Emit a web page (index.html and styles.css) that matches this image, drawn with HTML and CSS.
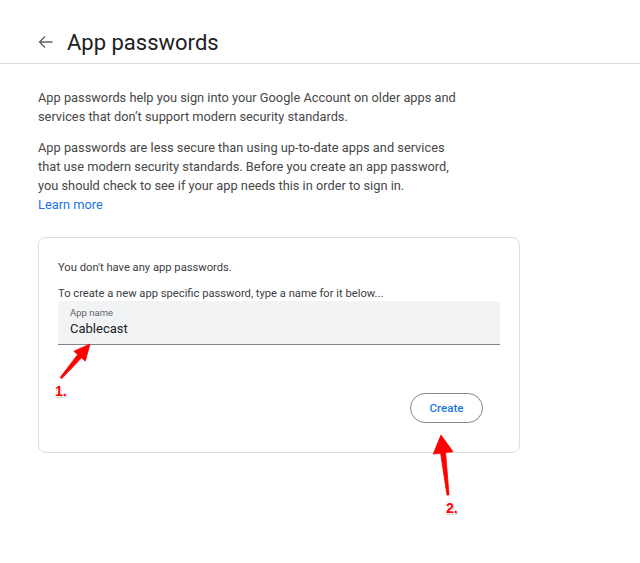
FILE: index.html
```html
<!DOCTYPE html>
<html lang="en">
<head>
<meta charset="utf-8">
<title>App passwords</title>
<link rel="stylesheet" href="styles.css">
</head>
<body>
<header class="topbar">
  <svg class="back" width="15" height="14" viewBox="0 0 15 14" aria-hidden="true"><path d="M14.5 7H1.5M7 1.5L1.5 7L7 12.5" fill="none" stroke="#5f6368" stroke-width="1.3"/></svg>
  <h1 class="title">App passwords</h1>
</header>
<main class="content">
  <p class="intro">App passwords help you sign into your Google Account on older apps and services that don’t support modern security standards.</p>
  <p class="intro">App passwords are less secure than using up-to-date apps and services that use modern security standards. Before you create an app password, you should check to see if your app needs this in order to sign in.<br><a class="link" href="#">Learn more</a></p>
  <section class="card">
    <p class="note">You don't have any app passwords.</p>
    <p class="note hint">To create a new app specific password, type a name for it below...</p>
    <div class="field">
      <span class="field-label">App name</span>
      <span class="field-value">Cablecast</span>
    </div>
    <div class="actions">
      <button class="btn">Create</button>
    </div>
  </section>
</main>
<svg class="annot" width="640" height="563" viewBox="0 0 640 563" aria-hidden="true">
  <polygon points="61.8,378.6 81.5,357.8 85.3,361.1 90,344 73.9,351.3 77.7,354.6 60.2,377.4" fill="#ff0000" stroke="#ff0000" stroke-width="0.8" stroke-linejoin="round"/>
  <polygon points="449,494.9 445.6,452.6 453,451.7 441,435 433.2,454.1 440.6,453.2 447,495.1" fill="#ff0000" stroke="#ff0000" stroke-width="0.8" stroke-linejoin="round"/>
</svg>
<span class="mark mark-1">1.</span>
<span class="mark mark-2">2.</span>
</body>
</html>
```
FILE: styles.css
```css
html, body {
  margin: 0;
  padding: 0;
  background: #ffffff;
}
body {
  position: relative;
  width: 640px;
  height: 563px;
  overflow: hidden;
  font-family: Roboto, "Noto Sans", Arial, sans-serif;
  color: #202124;
}
.topbar {
  display: flex;
  align-items: center;
  height: 64px;
  padding-left: 38px;
  padding-top: 21px;
  border-bottom: 1px solid #dadce0;
  box-sizing: border-box;
}
.back {
  flex: none;
  margin-right: 14px;
}
.title {
  margin: 0;
  font-size: 22px;
  font-weight: 400;
  color: #202124;
}
.content {
  width: 482px;
  padding: 24px 0 0 38px;
}
.intro {
  max-width: 424px;
  margin: 0 0 12px;
  font-size: 12.8px;
  line-height: 19px;
  color: #474747;
}
.link {
  color: #1a73e8;
  text-decoration: none;
}
.card {
  margin-top: 23px;
  border: 1px solid #dadce0;
  border-radius: 8px;
  padding: 23px 19px 0 19px;
  height: 216px;
  box-sizing: border-box;
}
.note {
  margin: 0;
  font-size: 11.2px;
  line-height: 14px;
  color: #3c4043;
}
.hint {
  margin-top: 12px;
}
.field {
  display: flex;
  flex-direction: column;
  height: 44px;
  box-sizing: border-box;
  padding: 6px 12px 0;
  background: #f1f3f4;
  border-bottom: 1px solid #80868b;
  border-radius: 4px 4px 0 0;
}
.field-label {
  font-size: 9.5px;
  line-height: 11px;
  color: #5f6368;
}
.field-value {
  font-size: 13px;
  line-height: 18px;
  color: #202124;
  margin-top: 2px;
}
.actions {
  display: flex;
  justify-content: flex-end;
  margin-top: 48px;
  padding-right: 17px;
}
.btn {
  width: 73px;
  height: 30px;
  border: 1px solid #80868b;
  border-radius: 15px;
  background: #fff;
  color: #1a73e8;
  font-family: Roboto, Arial, sans-serif;
  font-size: 11.5px;
  font-weight: 500;
  padding: 0;
}
.annot {
  position: absolute;
  left: 0;
  top: 0;
  pointer-events: none;
}
.mark {
  position: absolute;
  font-family: "Liberation Sans", Arial, sans-serif;
  font-weight: 700;
  font-size: 14px;
  line-height: 14px;
  color: #ff0000;
  text-shadow: -1px -1px 0 #fff, 1px -1px 0 #fff, -1px 1px 0 #fff, 1px 1px 0 #c8c8c8, 0 2px 0 #d0d0d0;
}
.mark-1 {
  left: 55px;
  top: 384px;
}
.mark-2 {
  left: 446px;
  top: 501px;
}
```
